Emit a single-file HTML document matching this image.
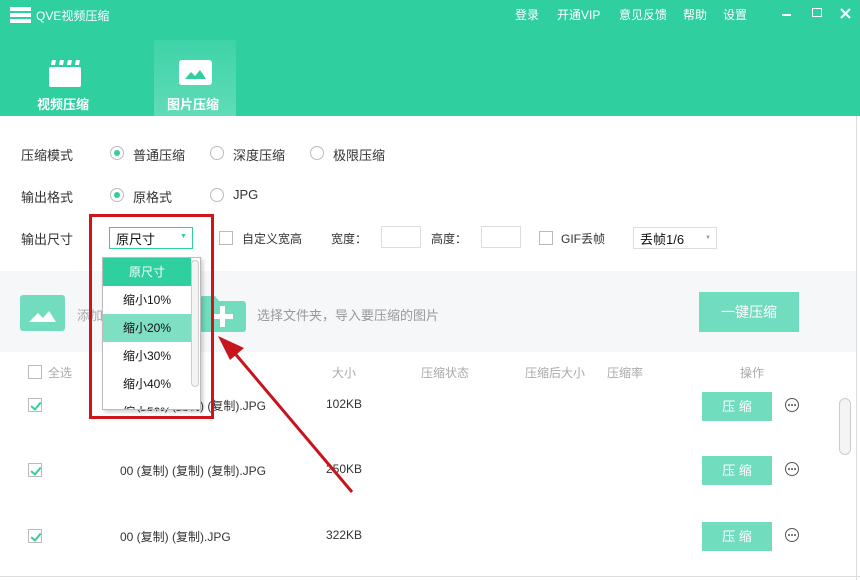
<!DOCTYPE html>
<html><head><meta charset="utf-8"><style>
*{margin:0;padding:0;box-sizing:border-box}
body{width:860px;height:580px;position:relative;overflow:hidden;background:#fff;font-family:"Liberation Sans","Noto Sans CJK SC",sans-serif;font-size:13px;color:#333}
.a{position:absolute;white-space:nowrap}
.hdr{position:absolute;left:0;top:0;width:860px;height:116px;background:#2fcfa0}
.w{color:#fff}
.radio{position:absolute;width:14px;height:14px;border:1px solid #bbb;border-radius:50%;background:#fff}
.radio.on::after{content:"";position:absolute;left:3px;top:3px;width:6px;height:6px;border-radius:50%;background:#2fcfa0}
.cb{position:absolute;width:14px;height:14px;border:1px solid #bbb;background:#fff}
.cb.on::after{content:"";position:absolute;left:4px;top:1px;width:4px;height:8px;border:solid #2fcfa0;border-width:0 2px 2px 0;transform:rotate(40deg)}
.btn{position:absolute;background:#72dcbe;color:#fff;text-align:center}
.box{position:absolute;border:1px solid #ddd;background:#fff}
.item{position:absolute;left:0;width:88px;height:28px;line-height:28px;text-align:center;font-size:12px;color:#111}
</style></head><body>
<div class="hdr"></div>
<div class="a" style="left:10px;top:7px;width:21px;height:4px;background:#fff"></div>
<div class="a" style="left:10px;top:13px;width:21px;height:4px;background:#fff"></div>
<div class="a" style="left:10px;top:19px;width:21px;height:4px;background:#fff"></div>
<div class="a w" style="left:36px;top:7px;font-size:12px">QVE视频压缩</div>
<div class="a w" style="left:515px;top:6px;font-size:12px">登录</div>
<div class="a w" style="left:557px;top:6px;font-size:12px">开通VIP</div>
<div class="a w" style="left:619px;top:6px;font-size:12px">意见反馈</div>
<div class="a w" style="left:683px;top:6px;font-size:12px">帮助</div>
<div class="a w" style="left:723px;top:6px;font-size:12px">设置</div>
<div class="a" style="left:782px;top:14px;width:9px;height:2px;background:#fff"></div>
<div class="a" style="left:812px;top:8px;width:10px;height:9px;border:1.5px solid #fff"></div>
<svg class="a" style="left:840px;top:8px" width="11" height="11"><path d="M1 1L10 10M10 1L1 10" stroke="#fff" stroke-width="2.2"/></svg>
<div class="a" style="left:154px;top:40px;width:82px;height:76px;background:linear-gradient(#3fd3a8,#5fdcb8)"></div>
<svg class="a" style="left:49px;top:60px" width="32" height="27"><rect x="0" y="7" width="32" height="20" rx="2" fill="#fff"/><path d="M3 0h4l-1 5h-4zM11 0h4l-1 5h-4zM19 0h4l-1 5h-4zM27 0h4l-1 5h-4z" fill="#fff"/></svg>
<div class="a" style="left:179px;top:60px;width:33px;height:25px;background:#fff;border-radius:3px"></div>
<svg class="a" style="left:179px;top:60px" width="33" height="25"><path d="M6 19 L12 12 L16 16 L21 10 L27 19Z" fill="#2fcfa0"/></svg>
<div class="a w" style="left:37px;top:94px;font-weight:bold">视频压缩</div>
<div class="a w" style="left:167px;top:94px;font-weight:bold">图片压缩</div>

<div class="a" style="left:21px;top:145px">压缩模式</div>
<div class="radio on" style="left:110px;top:146px"></div><div class="a" style="left:133px;top:145px">普通压缩</div>
<div class="radio" style="left:210px;top:146px"></div><div class="a" style="left:233px;top:145px">深度压缩</div>
<div class="radio" style="left:310px;top:146px"></div><div class="a" style="left:333px;top:145px">极限压缩</div>
<div class="a" style="left:21px;top:187px">输出格式</div>
<div class="radio on" style="left:110px;top:188px"></div><div class="a" style="left:133px;top:187px">原格式</div>
<div class="radio" style="left:210px;top:188px"></div><div class="a" style="left:233px;top:187px">JPG</div>
<div class="a" style="left:21px;top:229px">输出尺寸</div>
<div class="box" style="left:109px;top:227px;width:84px;height:22px;border-color:#2fcfa0"></div>
<div class="a" style="left:116px;top:229px;color:#111">原尺寸</div>
<div class="a" style="left:180px;top:233px;font-size:7px;color:#2fcfa0">▼</div>
<div class="cb" style="left:219px;top:231px"></div><div class="a" style="left:242px;top:230px;font-size:12px">自定义宽高</div>
<div class="a" style="left:331px;top:230px;font-size:12px">宽度：</div>
<div class="box" style="left:381px;top:226px;width:40px;height:22px"></div>
<div class="a" style="left:431px;top:230px;font-size:12px">高度：</div>
<div class="box" style="left:481px;top:226px;width:40px;height:22px"></div>
<div class="cb" style="left:539px;top:231px"></div><div class="a" style="left:561px;top:230px;font-size:12px">GIF丢帧</div>
<div class="box" style="left:633px;top:227px;width:84px;height:22px"></div>
<div class="a" style="left:640px;top:229px;color:#111">丢帧1/6</div>
<div class="a" style="left:705px;top:235px;font-size:6px;color:#999">▼</div>

<div class="a" style="left:0;top:271px;width:856px;height:81px;background:#f5f7f9"></div>
<div class="a" style="left:20px;top:295px;width:45px;height:36px;background:#72dcbe;border-radius:3px"></div>
<svg class="a" style="left:20px;top:295px" width="45" height="36"><path d="M9 27 L18 18 L23 23 L29 16 L36 27Z" fill="#fff"/></svg>
<div class="a" style="left:77px;top:305px;color:#aaa">添加</div>
<svg class="a" style="left:200px;top:296px" width="46" height="36"><path d="M0 3a3 3 0 0 1 3-3h12l4 5h24a3 3 0 0 1 3 3v25a3 3 0 0 1-3 3H3a3 3 0 0 1-3-3z" fill="#72dcbe"/><path d="M20 10h5v8h8v5h-8v8h-5v-8h-8v-5h8z" fill="#fff"/></svg>
<div class="a" style="left:257px;top:305px;color:#999">选择文件夹，导入要压缩的图片</div>
<div class="btn" style="left:699px;top:292px;width:100px;height:40px;line-height:40px;font-size:14px">一键压缩</div>

<div class="cb" style="left:28px;top:365px"></div><div class="a" style="left:48px;top:364px;color:#aaa;font-size:12px">全选</div>
<div class="a" style="left:332px;top:364px;color:#aaa;font-size:12px">大小</div>
<div class="a" style="left:421px;top:364px;color:#aaa;font-size:12px">压缩状态</div>
<div class="a" style="left:525px;top:364px;color:#aaa;font-size:12px">压缩后大小</div>
<div class="a" style="left:607px;top:364px;color:#aaa;font-size:12px">压缩率</div>
<div class="a" style="left:740px;top:364px;color:#aaa;font-size:12px">操作</div>

<div class="cb on" style="left:28px;top:398px"></div><div class="a" style="left:120px;top:397px;font-size:12px">00 (复制) (复制) (复制).JPG</div><div class="a" style="left:326px;top:397px;font-size:12px">102KB</div>
<div class="btn" style="left:702px;top:392px;width:70px;height:29px;line-height:29px">压 缩</div>
<div class="cb on" style="left:28px;top:463px"></div><div class="a" style="left:120px;top:462px;font-size:12px">00 (复制) (复制) (复制).JPG</div><div class="a" style="left:326px;top:462px;font-size:12px">250KB</div>
<div class="btn" style="left:702px;top:456px;width:70px;height:29px;line-height:29px">压 缩</div>
<div class="cb on" style="left:28px;top:529px"></div><div class="a" style="left:120px;top:528px;font-size:12px">00 (复制) (复制).JPG</div><div class="a" style="left:326px;top:528px;font-size:12px">322KB</div>
<div class="btn" style="left:702px;top:522px;width:70px;height:29px;line-height:29px">压 缩</div>
<svg class="a" style="left:0;top:0" width="860" height="580" fill="none" stroke="#555"><g><circle cx="792" cy="405" r="6.5"/><circle cx="792" cy="469" r="6.5"/><circle cx="792" cy="535" r="6.5"/></g><g fill="#555" stroke="none"><circle cx="789" cy="405" r="1"/><circle cx="792" cy="405" r="1"/><circle cx="795" cy="405" r="1"/><circle cx="789" cy="469" r="1"/><circle cx="792" cy="469" r="1"/><circle cx="795" cy="469" r="1"/><circle cx="789" cy="535" r="1"/><circle cx="792" cy="535" r="1"/><circle cx="795" cy="535" r="1"/></g></svg>
<div class="a" style="left:839px;top:398px;width:12px;height:57px;border:1px solid #ccc;border-radius:6px;background:#f4f4f4"></div>
<div class="a" style="left:856px;top:116px;width:1px;height:464px;background:#ddd"></div>
<div class="a" style="left:0;top:576px;width:860px;height:1px;background:#ddd"></div>

<div class="a" style="left:102px;top:257px;width:99px;height:153px;background:#fff;border:1px solid #bbb;box-shadow:2px 2px 4px rgba(0,0,0,.2);overflow:hidden">
<div class="item" style="top:0;background:#2fcfa0;color:#fff">原尺寸</div>
<div class="item" style="top:28px">缩小10%</div>
<div class="item" style="top:56px;background:#7fdfc3">缩小20%</div>
<div class="item" style="top:84px">缩小30%</div>
<div class="item" style="top:112px">缩小40%</div>
<div class="item" style="top:140px">缩小50%</div>
<div class="a" style="left:88px;top:2px;width:8px;height:127px;border:1px solid #ccc;border-radius:4px;background:#f4f4f4"></div>
</div>
<div class="a" style="left:89px;top:214px;width:125px;height:205px;border:3px solid #d0141c"></div>
<svg class="a" style="left:0;top:0" width="860" height="580"><line x1="352" y1="492" x2="232" y2="350" stroke="#c8141c" stroke-width="3"/><path d="M218 336 L244 348 L230 360Z" fill="#c8141c"/></svg>
</body></html>
